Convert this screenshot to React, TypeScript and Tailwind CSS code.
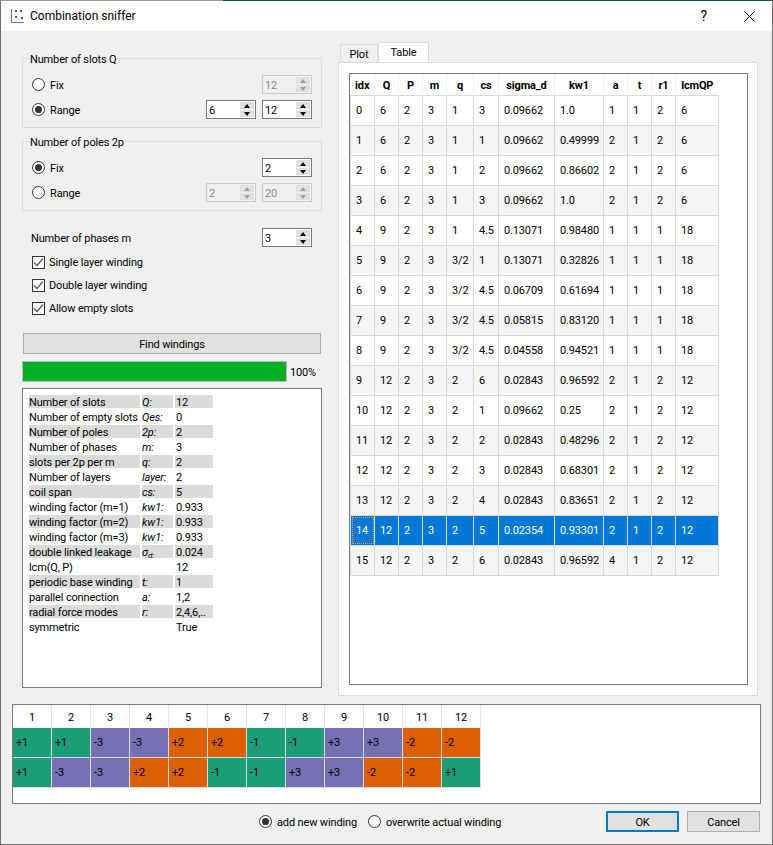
const font = "font-['Roboto',sans-serif]";

const colHeads = ["idx", "Q", "P", "m", "q", "cs", "sigma_d", "kw1", "a", "t", "r1", "lcmQP"];

const tableRows = [
  ["0", "6", "2", "3", "1", "3", "0.09662", "1.0", "1", "1", "2", "6"],
  ["1", "6", "2", "3", "1", "1", "0.09662", "0.49999", "2", "1", "2", "6"],
  ["2", "6", "2", "3", "1", "2", "0.09662", "0.86602", "2", "1", "2", "6"],
  ["3", "6", "2", "3", "1", "3", "0.09662", "1.0", "2", "1", "2", "6"],
  ["4", "9", "2", "3", "1", "4.5", "0.13071", "0.98480", "1", "1", "1", "18"],
  ["5", "9", "2", "3", "3/2", "1", "0.13071", "0.32826", "1", "1", "1", "18"],
  ["6", "9", "2", "3", "3/2", "4.5", "0.06709", "0.61694", "1", "1", "1", "18"],
  ["7", "9", "2", "3", "3/2", "4.5", "0.05815", "0.83120", "1", "1", "1", "18"],
  ["8", "9", "2", "3", "3/2", "4.5", "0.04558", "0.94521", "1", "1", "1", "18"],
  ["9", "12", "2", "3", "2", "6", "0.02843", "0.96592", "2", "1", "2", "12"],
  ["10", "12", "2", "3", "2", "1", "0.09662", "0.25", "2", "1", "2", "12"],
  ["11", "12", "2", "3", "2", "2", "0.02843", "0.48296", "2", "1", "2", "12"],
  ["12", "12", "2", "3", "2", "3", "0.02843", "0.68301", "2", "1", "2", "12"],
  ["13", "12", "2", "3", "2", "4", "0.02843", "0.83651", "2", "1", "2", "12"],
  ["14", "12", "2", "3", "2", "5", "0.02354", "0.93301", "2", "1", "2", "12"],
  ["15", "12", "2", "3", "2", "6", "0.02843", "0.96592", "4", "1", "2", "12"],
];

const info = [
  ["Number of slots", "Q:", "12"],
  ["Number of empty slots", "Qes:", "0"],
  ["Number of poles", "2p:", "2"],
  ["Number of phases", "m:", "3"],
  ["slots per 2p per m", "q:", "2"],
  ["Number of layers", "layer:", "2"],
  ["coil span", "cs:", "5"],
  ["winding factor (m=1)", "kw1:", "0.933"],
  ["winding factor (m=2)", "kw1:", "0.933"],
  ["winding factor (m=3)", "kw1:", "0.933"],
  ["double linked leakage", "σd:", "0.024"],
  ["lcm(Q, P)", "", "12"],
  ["periodic base winding", "t:", "1"],
  ["parallel connection", "a:", "1,2"],
  ["radial force modes", "r:", "2,4,6,.."],
  ["symmetric", "", "True"],
];

const layer1 = ["+1", "+1", "-3", "-3", "+2", "+2", "-1", "-1", "+3", "+3", "-2", "-2"];
const layer2 = ["+1", "-3", "-3", "+2", "+2", "-1", "-1", "+3", "+3", "-2", "-2", "+1"];

const phaseColor = (v: string) => {
  if (v.endsWith("1")) return "bg-[#1b9e77]";
  if (v.endsWith("2")) return "bg-[#d95f02]";
  return "bg-[#7570b3]";
};

const Spin = ({ value, disabled }: { value: string; disabled?: boolean }) => (
  <div
    className={`flex h-[19px] w-[50px] items-center border ${
      disabled ? "border-[#cccccc] bg-[#f0f0f0]" : "border-[#7a7a7a] bg-white"
    }`}
  >
    <span className={`flex-1 pl-[2px] pt-[1px] ${disabled ? "text-[#8a8a8a]" : "text-black"}`}>{value}</span>
    <div className="mr-[1px] flex h-[15px] w-[14px] flex-col gap-[1px]">
      <div className="flex flex-1 items-center justify-center bg-[#e1e1e1]">
        <div
          className={`h-0 w-0 border-x-[3.5px] border-b-[4px] border-x-transparent ${
            disabled ? "border-b-[#a0a0a0]" : "border-b-black"
          }`}
        />
      </div>
      <div className="flex flex-1 items-center justify-center bg-[#e1e1e1]">
        <div
          className={`h-0 w-0 border-x-[3.5px] border-t-[4px] border-x-transparent ${
            disabled ? "border-t-[#a0a0a0]" : "border-t-black"
          }`}
        />
      </div>
    </div>
  </div>
);

const Radio = ({ on, label }: { on?: boolean; label: string }) => (
  <div className="flex items-center gap-[5px]">
    <div className="flex h-[13px] w-[13px] items-center justify-center rounded-full border border-[#333333] bg-white">
      {on && <div className="h-[7px] w-[7px] rounded-full bg-[#333333]" />}
    </div>
    <span className="pt-[1px]">{label}</span>
  </div>
);

const CheckRow = ({ label }: { label: string }) => (
  <div className="flex h-[13px] items-center gap-[4px]">
    <div className="flex h-[13px] w-[13px] items-center justify-center border border-[#333333] bg-white">
      <svg width="11" height="11" viewBox="0 0 11 11" fill="none">
        <path d="M1 5.5 4 8.5 10 1.5" stroke="#555555" strokeWidth="1.2" />
      </svg>
    </div>
    <span>{label}</span>
  </div>
);

const Group = ({ title, children }: { title: string; children: React.ReactNode }) => (
  <fieldset className="h-[77px] border border-[#dcdcdc] px-[9px]">
    <legend className="-ml-[2px] h-[14px] leading-[18px]">{title}</legend>
    {children}
  </fieldset>
);

const App = () => {
  return (
    <div className={`${font} flex h-[845px] w-[773px] flex-col border-x border-b border-[#6f6f6f] bg-[#f0f0f0] text-[11px] leading-[15px] tracking-[-0.15px] text-black`}>
      {/* window top edge */}
      <div className="flex h-[1px] shrink-0">
        <div className="w-[222px] bg-[#9a9a9a]" />
        <div className="flex-1 bg-[#1c4664]" />
      </div>
      {/* title bar */}
      <div className="flex h-[30px] shrink-0 items-center bg-white">
        <svg width="16" height="16" viewBox="0 0 16 16" className="ml-[9px]" fill="none">
          <path d="M1.5 1v13.5H14" stroke="#5f7f99" strokeWidth="1" />
          <rect x="5" y="2" width="2" height="2" fill="#46627a" />
          <rect x="10" y="2" width="2" height="2" fill="#46627a" />
          <rect x="5" y="8" width="2" height="2" fill="#46627a" />
          <rect x="11" y="9" width="2" height="2" fill="#46627a" />
        </svg>
        <span className="ml-[4px] text-[12px] tracking-normal">Combination sniffer</span>
        <span className="ml-auto mr-[37px] text-[14px]">?</span>
        <svg width="11" height="11" viewBox="0 0 11 11" className="mr-[17px]" fill="none">
          <path d="M0.5 0.5 10.5 10.5M10.5 0.5 0.5 10.5" stroke="#111111" strokeWidth="1" />
        </svg>
      </div>

      <div className="flex min-h-0 flex-1 pl-[21px] pr-[14px]">
        {/* left column */}
        <div className="flex w-[300px] shrink-0 flex-col pt-[20px]">
          <Group title="Number of slots Q">
            <div className="mt-[7px] flex h-[25px] items-center justify-end">
              <div className="mr-auto"><Radio label="Fix" /></div>
              <Spin value="12" disabled />
            </div>
            <div className="flex h-[25px] items-center justify-end gap-[6px]">
              <div className="mr-auto"><Radio on label="Range" /></div>
              <Spin value="6" />
              <Spin value="12" />
            </div>
          </Group>
          <div className="h-[6px] shrink-0" />
          <Group title="Number of poles 2p">
            <div className="mt-[7px] flex h-[25px] items-center justify-end">
              <div className="mr-auto"><Radio on label="Fix" /></div>
              <Spin value="2" />
            </div>
            <div className="flex h-[25px] items-center justify-end gap-[6px]">
              <div className="mr-auto"><Radio label="Range" /></div>
              <Spin value="2" disabled />
              <Spin value="20" disabled />
            </div>
          </Group>

          <div className="mt-[17px] flex h-[19px] items-center justify-between pl-[9px] pr-[10px]">
            <span className="pt-[1px]">Number of phases m</span>
            <Spin value="3" />
          </div>
          <div className="mt-[9px] flex flex-col gap-[10px] pl-[10px]">
            <CheckRow label="Single layer winding" />
            <CheckRow label="Double layer winding" />
            <CheckRow label="Allow empty slots" />
          </div>

          <button className="mx-[1px] mt-[18px] h-[21px] shrink-0 border border-[#adadad] bg-[#e1e1e1] pt-[1px]">Find windings</button>
          <div className="mt-[7px] flex h-[21px] shrink-0 items-center gap-[3px]">
            <div className="h-[21px] w-[265px] border border-[#bcbcbc] bg-[#06b025]" />
            <span className="pt-[1px]">100%</span>
          </div>

          <div className="mt-[6px] h-[300px] shrink-0 border border-[#7a7a7a] bg-white pl-[6px] pt-[6px]">
            {info.map((row, i) => (
              <div key={row[0]} className="flex h-[15px] gap-[2px] overflow-hidden whitespace-nowrap">
                <div className={`h-[13px] w-[111px] leading-[15px] ${i % 2 === 0 ? "bg-[#dcdbdb]" : ""}`}>{row[0]}</div>
                <div className={`h-[13px] w-[31px] leading-[15px] italic ${i % 2 === 0 ? "bg-[#dcdbdb]" : ""}`}>
                  {row[1] === "σd:" ? (
                    <>
                      σ<sub className="text-[8px] leading-none">d:</sub>
                    </>
                  ) : (
                    row[1]
                  )}
                </div>
                <div className={`h-[13px] w-[38px] pl-[1px] leading-[15px] ${i % 2 === 0 ? "bg-[#dcdbdb]" : ""}`}>{row[2]}</div>
              </div>
            ))}
          </div>
        </div>

        {/* right column */}
        <div className="ml-[16px] flex w-[420px] shrink-0 flex-col pt-[11px]">
          <div className="flex h-[20px] items-end pl-[2px]">
            <div className="flex h-[18px] w-[38px] items-center justify-center border border-b-0 border-[#dcdcdc] bg-[#f0f0f0] pt-[1px]">Plot</div>
            <div className="-mb-[1px] flex h-[21px] w-[51px] items-center justify-center border border-b-0 border-[#dcdcdc] bg-white pb-[1px]">Table</div>
          </div>
          <div className="h-[634px] border border-[#dcdcdc] bg-white pl-[10px] pr-[9px] pt-[10px]">
            <div className="h-[612px] border border-[#7a7a7a] bg-white">
              <table className="table-fixed border-collapse text-center">
                <colgroup>
                  <col className="w-[24px]" />
                  <col className="w-[24px]" />
                  <col className="w-[24px]" />
                  <col className="w-[24px]" />
                  <col className="w-[27px]" />
                  <col className="w-[25px]" />
                  <col className="w-[56px]" />
                  <col className="w-[49px]" />
                  <col className="w-[24px]" />
                  <col className="w-[24px]" />
                  <col className="w-[24px]" />
                  <col className="w-[43px]" />
                </colgroup>
                <thead>
                  <tr className="h-[21px]">
                    {colHeads.map((h) => (
                      <th key={h} className="whitespace-nowrap border-r border-[#f0f0f0] p-0 pt-[2px] font-bold last:border-r-0">
                        {h}
                      </th>
                    ))}
                  </tr>
                </thead>
                <tbody>
                  {tableRows.map((row, i) => (
                    <tr
                      key={row[0]}
                      className={`h-[30px] ${i === 14 ? "bg-[#0078d7] text-white" : i % 2 === 1 ? "bg-[#f5f5f5]" : "bg-white"}`}
                    >
                      {row.map((cell, j) => (
                        <td key={j} className="overflow-hidden whitespace-nowrap border border-[#d9d9d9] p-0 pl-[5px] text-left">
                          {i === 14 && j === 0 ? (
                            <div className="-ml-[4px] flex h-[27px] items-center border border-dotted border-[#f0a040] pl-[3px]">{cell}</div>
                          ) : (
                            cell
                          )}
                        </td>
                      ))}
                    </tr>
                  ))}
                </tbody>
              </table>
            </div>
          </div>
        </div>
      </div>

      {/* winding table */}
      <div className="mx-[11px] h-[100px] shrink-0 border border-[#7a7a7a] bg-white">
        <div className="flex h-[23px]">
          {layer1.map((_, i) => (
            <div key={i} className="flex w-[39px] items-center justify-center border-r border-[#e4e4e4] pt-[1px]">
              {i + 1}
            </div>
          ))}
        </div>
        {[layer1, layer2].map((row, r) => (
          <div key={r} className="flex h-[30px]">
            {row.map((v, i) => (
              <div
                key={i}
                className={`flex w-[39px] items-center border-b border-r border-[#dcdcdc] pl-[3px] ${phaseColor(v)}`}
              >
                {v}
              </div>
            ))}
          </div>
        ))}
      </div>

      {/* bottom buttons */}
      <div className="flex h-[40px] shrink-0 items-center pb-[5px]">
        <div className="ml-[258px]"><Radio on label="add new winding" /></div>
        <div className="ml-[11px]"><Radio label="overwrite actual winding" /></div>
        <button className="ml-auto h-[21px] w-[73px] border-2 border-[#0078d7] bg-[#e1e1e1] pt-[1px]">OK</button>
        <button className="ml-[8px] mr-[12px] h-[21px] w-[73px] border border-[#adadad] bg-[#e1e1e1] pt-[1px]">Cancel</button>
      </div>
    </div>
  );
};

export default App;
